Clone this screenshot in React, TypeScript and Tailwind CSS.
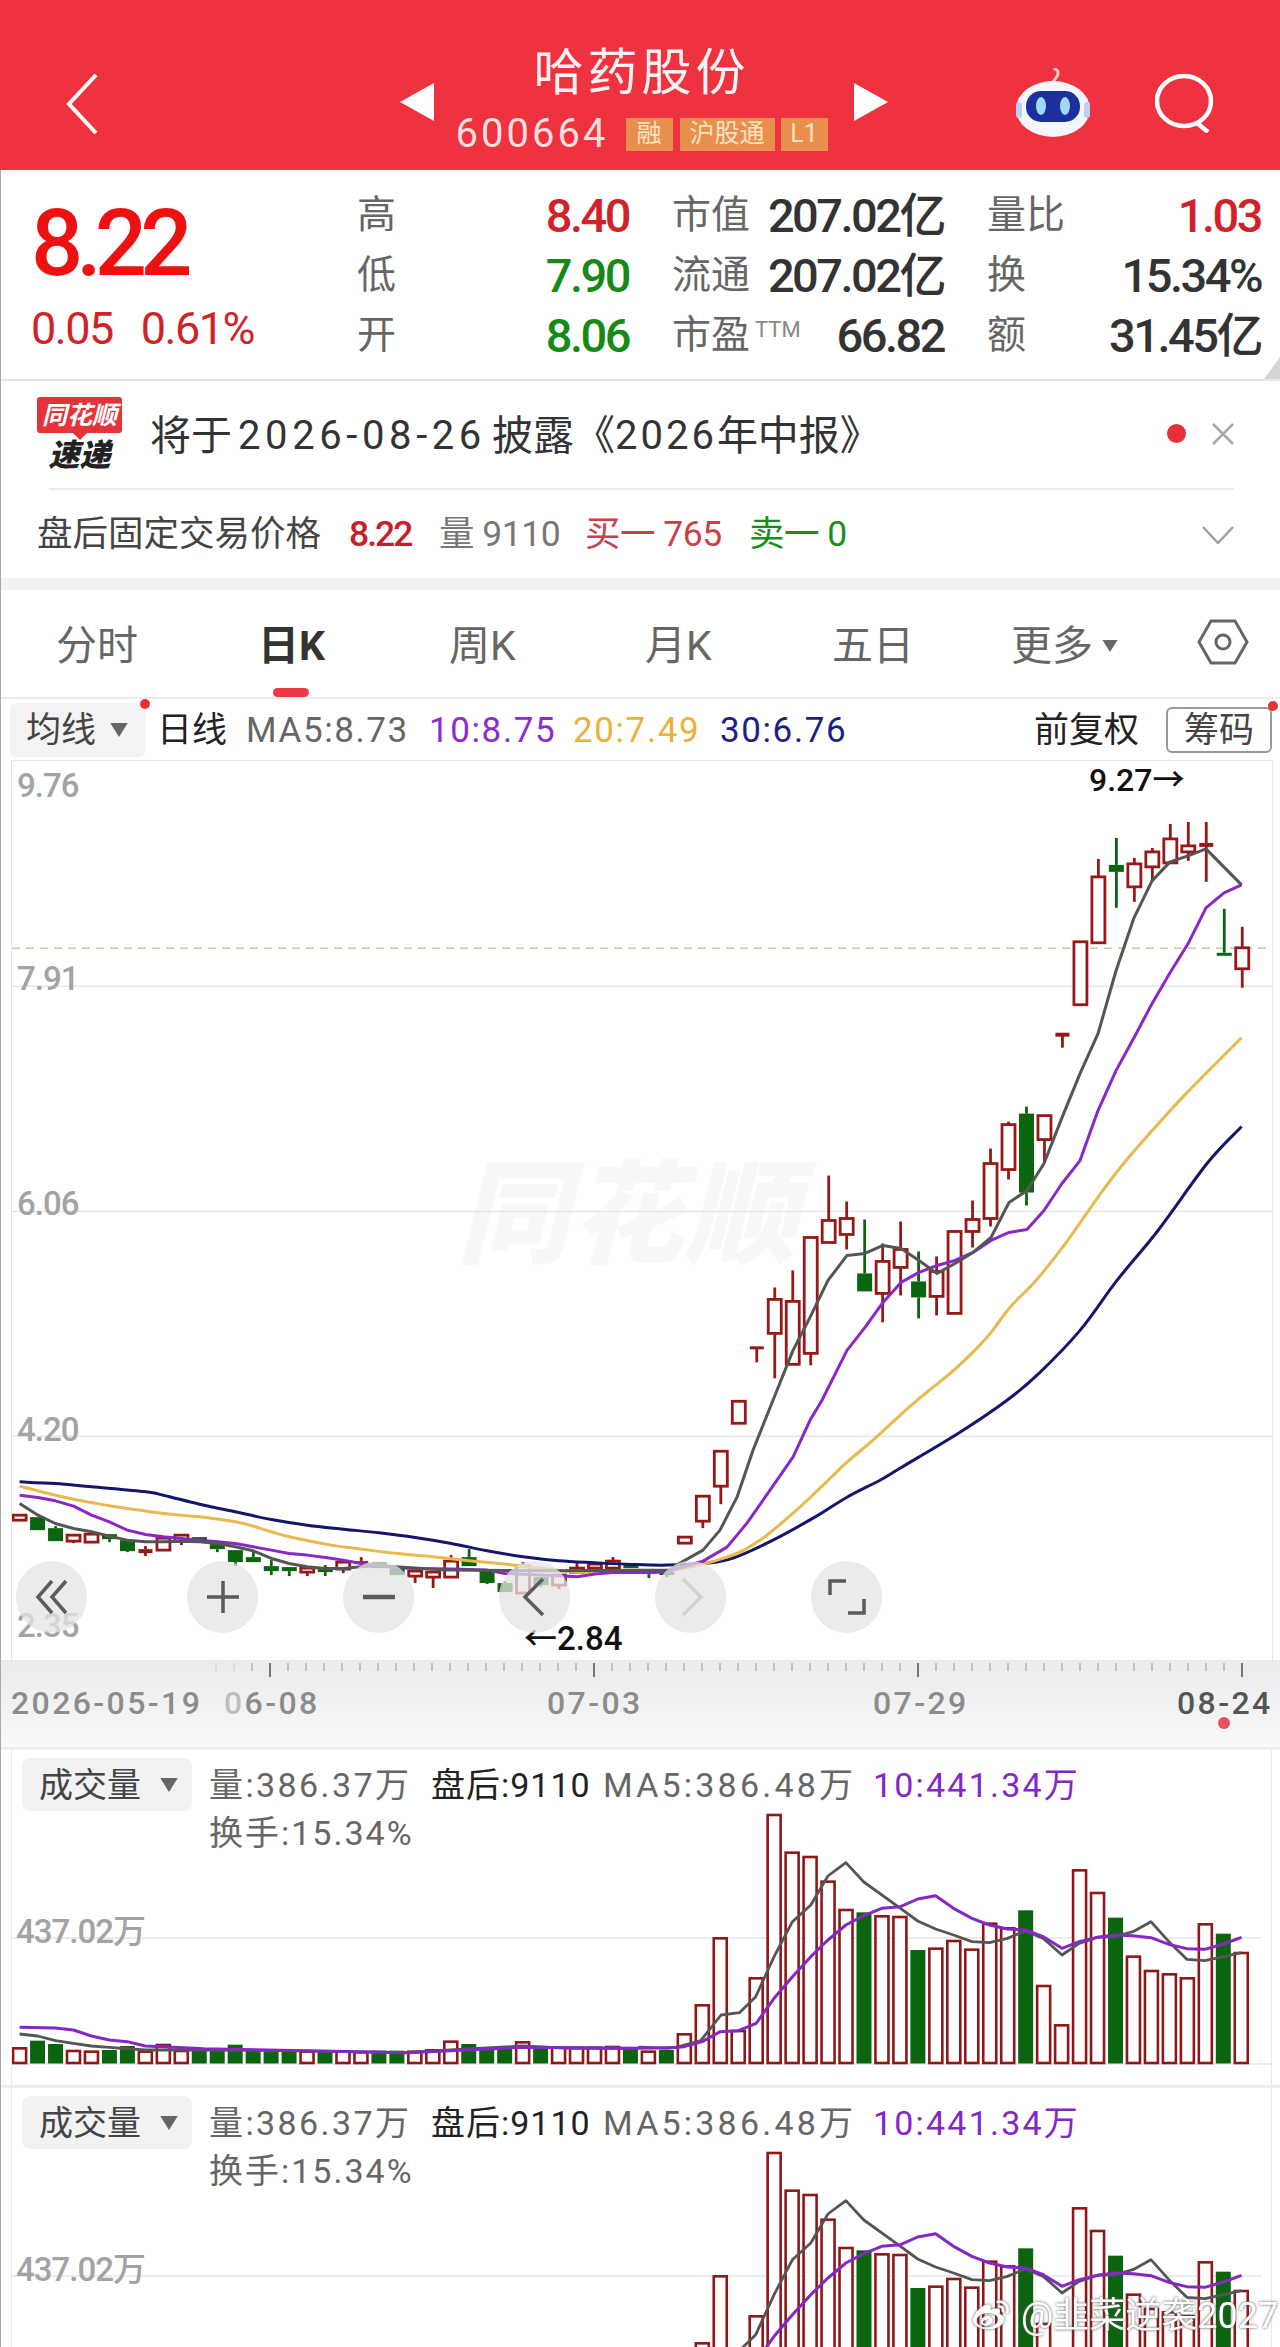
import { FaWeibo } from 'react-icons/fa'

type Pt = [number, number]
type Candle = { k: 'r' | 'g'; t: number; b: number; wt?: number; wb?: number }

const c = (k: 'r' | 'g', t: number, b: number, wt?: number, wb?: number): Candle => ({ k, t, b, wt, wb })
const cx = (i: number) => 19.6 + 17.98 * i

const RED = '#971818'
const GREEN = '#0b650f'

const candles: Candle[] = [
  c('r', 1515, 1520), c('g', 1517, 1530), c('g', 1528, 1541, 1526), c('r', 1535, 1541, undefined, 1543),
  c('r', 1534, 1542), c('g', 1534, 1539, undefined, 1542), c('g', 1540, 1551, undefined, 1552), c('r', 1549, 1552, 1546, 1556),
  c('r', 1538, 1550), c('r', 1535, 1541, 1534, 1545), c('g', 1537, 1542), c('g', 1544, 1549, undefined, 1552),
  c('g', 1550, 1562, undefined, 1566), c('g', 1557, 1562, 1551), c('g', 1566, 1571, 1560, 1575), c('g', 1567, 1571, undefined, 1576),
  c('r', 1568, 1572, undefined, 1576), c('g', 1569, 1572, 1565, 1576), c('r', 1562, 1569, undefined, 1573), c('r', 1561, 1563, 1557, 1565),
  c('g', 1562, 1568), c('g', 1568, 1575), c('r', 1571, 1576, undefined, 1583), c('r', 1572, 1577, undefined, 1588),
  c('r', 1561, 1577, 1555), c('g', 1557, 1566, 1549), c('g', 1569, 1583, undefined, 1584), c('g', 1583, 1592, 1581),
  c('r', 1566, 1593, 1562), c('g', 1577, 1585, undefined, 1587), c('r', 1575, 1585, undefined, 1589), c('r', 1568, 1572, 1562),
  c('r', 1564, 1568, 1563, 1570), c('r', 1561, 1568, 1557), c('g', 1563, 1568), c('g', 1570, 1574, undefined, 1578),
  c('g', 1572, 1575, undefined, 1577), c('r', 1537, 1543), c('r', 1496, 1521, undefined, 1528), c('r', 1451, 1486, undefined, 1504),
  c('r', 1401, 1423), c('r', 1346, 1348, undefined, 1362), c('r', 1299, 1333, 1287, 1378), c('r', 1301, 1364, 1270),
  c('r', 1237, 1353, undefined, 1365), c('r', 1220, 1242, 1175), c('r', 1218, 1234, 1201, 1249), c('g', 1273, 1291, 1219),
  c('r', 1261, 1293, 1243, 1322), c('r', 1249, 1267, 1221, 1295), c('g', 1281, 1297, 1251, 1318), c('r', 1271, 1296, 1256, 1315),
  c('r', 1231, 1313), c('r', 1219, 1231, 1200, 1247), c('r', 1163, 1218, 1148, 1226), c('r', 1124, 1169, 1121, 1179),
  c('g', 1113, 1192, 1106, 1205), c('r', 1115, 1139, undefined, 1162), c('r', 1032, 1035, undefined, 1047), c('r', 941, 1004),
  c('r', 876, 942, 858), c('g', 864, 871, 837, 907), c('r', 863, 886, 857, 901), c('r', 851, 866, 847, 880),
  c('r', 838, 862, 823), c('r', 845, 851, 821, 860), c('r', 842, 845, 821, 881), c('g', 952, 955, 908),
  c('r', 947, 968, 926, 987),
]

// left part of the lines was read off at 2.24x wide, 3x high
const L = (pts: Pt[]): Pt[] => pts.map(([x, y]) => [x / 2.24, 1400 + y / 3])

const ma5: Pt[] = [
  ...L([[44, 310], [85, 345], [124, 370], [165, 385], [205, 395], [245, 408], [285, 420], [326, 425], [366, 425], [406, 423], [447, 425], [487, 430], [527, 440], [567, 452], [608, 475], [648, 490], [688, 500], [729, 505], [769, 505], [809, 500], [849, 497], [1000, 510], [1250, 512], [1500, 510]]),
  [680, 1563], [703, 1550], [720, 1530], [737, 1497], [753, 1450], [773, 1400], [793, 1350], [810, 1317], [828, 1280], [847, 1255], [865, 1253], [883, 1245], [901, 1248], [919, 1260], [937, 1273], [955, 1263], [973, 1252], [991, 1237], [1009, 1202], [1027, 1190], [1044, 1163], [1062, 1117], [1080, 1073], [1098, 1033], [1116, 970], [1134, 917], [1152, 880], [1170, 861], [1188, 855], [1206, 848], [1241.6, 884],
]
const ma10: Pt[] = [
  ...L([[44, 285], [85, 292], [124, 302], [165, 318], [205, 345], [245, 365], [285, 390], [326, 403], [366, 410], [406, 415], [447, 420], [487, 425], [527, 430], [567, 440], [608, 450], [648, 460], [688, 465], [729, 472], [769, 480], [809, 490], [849, 497], [890, 503], [930, 505], [1011, 507], [1091, 510], [1131, 520], [1212, 525], [1252, 527], [1293, 530], [1333, 522], [1373, 517], [1454, 517], [1494, 515]]),
  [703, 1561], [727, 1547], [747, 1523], [770, 1490], [793, 1457], [810, 1420], [822, 1400], [847, 1350], [865, 1327], [883, 1302], [901, 1282], [919, 1272], [937, 1265], [955, 1260], [973, 1252], [991, 1240], [1009, 1232], [1027, 1229], [1044, 1210], [1062, 1183], [1080, 1160], [1098, 1110], [1116, 1070], [1134, 1037], [1152, 1003], [1170, 972], [1188, 943], [1206, 907], [1224, 892], [1241.6, 884],
]
const ma20: Pt[] = [
  ...L([[44, 258], [85, 272], [124, 285], [165, 297], [205, 307], [245, 317], [285, 325], [366, 340], [447, 350], [527, 365], [567, 378], [608, 395], [648, 410], [729, 432], [809, 447], [890, 460], [970, 470], [1051, 482], [1131, 492], [1212, 505], [1293, 515], [1373, 515], [1494, 513]]),
  [727, 1557], [760, 1540], [793, 1513], [820, 1488], [847, 1462], [873, 1440], [900, 1415], [917, 1400], [957, 1367], [987, 1337], [1010, 1307], [1036, 1280], [1064, 1245], [1097, 1198], [1122, 1165], [1154, 1128], [1187, 1092], [1241.6, 1037],
]
const ma30: Pt[] = [
  ...L([[44, 245], [124, 250], [205, 260], [326, 275], [366, 285], [447, 312], [527, 335], [608, 358], [688, 375], [769, 387], [849, 398], [930, 412], [1011, 430], [1091, 452], [1172, 470], [1252, 482], [1333, 488], [1413, 493], [1494, 495]]),
  [707, 1563], [733, 1558], [773, 1540], [813, 1518], [847, 1497], [880, 1480], [900, 1468], [960, 1432], [1007, 1400], [1040, 1372], [1080, 1330], [1117, 1280], [1158, 1230], [1207, 1163], [1241.6, 1126],
]

const pl = (pts: Pt[]) => pts.map(([x, y]) => `${x},${y}`).join(' ')

// catmull-rom through the read-off points, so the long averages don't kink
function smooth(pts: Pt[]) {
  let d = `M${pts[0][0]} ${pts[0][1]}`
  for (let i = 0; i < pts.length - 1; i++) {
    const p0 = pts[Math.max(i - 1, 0)]
    const p1 = pts[i]
    const p2 = pts[i + 1]
    const p3 = pts[Math.min(i + 2, pts.length - 1)]
    d += ` C${p1[0] + (p2[0] - p0[0]) / 6} ${p1[1] + (p2[1] - p0[1]) / 6} ${p2[0] - (p3[0] - p1[0]) / 6} ${p2[1] - (p3[1] - p1[1]) / 6} ${p2[0]} ${p2[1]}`
  }
  return d
}

const volBars: { k: 'r' | 'g'; top: number }[] = [
  ...([
    ['r', 922], ['g', 902], ['g', 912], ['r', 930], ['r', 932], ['g', 930], ['g', 918], ['r', 932], ['r', 912], ['r', 930],
    ['g', 930], ['g', 930], ['g', 914], ['g', 930], ['g', 928], ['g', 930], ['r', 932], ['g', 932], ['r', 932], ['r', 934],
    ['g', 932], ['g', 932], ['r', 932], ['r', 928], ['r', 902], ['g', 912], ['g', 930], ['g', 925], ['r', 904], ['g', 925],
    ['r', 920], ['r', 920], ['r', 920], ['r', 918], ['g', 925],
  ] as ['r' | 'g', number][]).map(([k, z]) => ({ k, top: 1740 + z / 3 })),
  ...([
    ['r', 962], ['g', 960], ['r', 910], ['r', 823], ['r', 622], ['r', 900], ['r', 742], ['r', 252], ['r', 365], ['r', 378],
    ['r', 452], ['r', 537], ['g', 547], ['r', 556], ['r', 558], ['g', 660], ['r', 653], ['r', 630], ['r', 656], ['r', 578],
    ['r', 592], ['g', 541], ['r', 765], ['r', 883], ['r', 418], ['r', 486], ['g', 563], ['r', 677], ['r', 720], ['r', 730],
    ['r', 742], ['r', 580], ['g', 611], ['r', 666],
  ] as ['r' | 'g', number][]).map(([k, z]) => ({ k, top: 1730 + z / 3 })),
]

const volL = (pts: Pt[]): Pt[] => pts.map(([x, y]) => [x / 2.45, 1740 + y / 3])
const volR = (pts: Pt[]): Pt[] => pts.map(([x, y]) => [640 + x / 2.45, 1730 + y / 3])

const volMa5: Pt[] = [
  ...volL([[48, 882], [92, 888], [136, 902], [180, 910], [224, 918], [268, 922], [356, 930], [500, 930], [700, 932], [1000, 938], [1104, 930], [1280, 918], [1400, 925], [1560, 925]]),
  ...volR([[0, 955], [90, 952], [150, 932], [200, 855], [245, 848], [285, 800], [330, 680], [375, 575], [420, 525], [462, 438], [506, 398], [550, 456], [640, 535], [682, 573], [726, 597], [770, 615], [815, 635], [858, 638], [902, 625], [946, 603], [990, 625], [1036, 675], [1078, 640], [1122, 622], [1166, 620], [1210, 605], [1254, 575], [1298, 635], [1342, 688], [1386, 692], [1432, 680], [1476, 668]]),
]
const volMa10: Pt[] = [
  ...volL([[48, 862], [136, 864], [180, 870], [224, 888], [268, 900], [312, 905], [356, 918], [400, 920], [500, 926], [750, 932], [1000, 938], [1104, 932], [1280, 922], [1560, 925]]),
  ...volR([[0, 952], [66, 955], [110, 950], [154, 935], [198, 905], [242, 902], [286, 880], [330, 805], [375, 740], [420, 680], [462, 630], [506, 585], [550, 557], [594, 535], [640, 530], [682, 507], [726, 497], [770, 535], [815, 565], [858, 585], [902, 597], [946, 600], [990, 620], [1036, 655], [1078, 635], [1122, 622], [1166, 615], [1210, 617], [1254, 623], [1298, 643], [1342, 656], [1386, 658], [1432, 642], [1476, 622]]),
]

const ticks = Array.from({ length: 58 }, (_, i) => 216 + 18 * i)
const majorTicks = [270, 594, 918, 1242]

function Tri({ className }: { className: string }) {
  return (
    <svg viewBox="0 0 10 8" className={className}>
      <polygon points="0,0 10,0 5,8" fill="currentColor" />
    </svg>
  )
}

function Robot() {
  return (
    <svg viewBox="0 0 76 70" className="h-[70px] w-[76px]">
      <path d="M38 16 C38 10 44 10 43 4 C42 1 40 1 39 2" fill="none" stroke="#f6c9c9" strokeWidth="3" />
      <ellipse cx="38" cy="41" rx="37" ry="28" fill="#f3f6fd" />
      <rect x="1" y="34" width="6" height="16" rx="3" fill="#bcd0f2" />
      <rect x="69" y="34" width="6" height="16" rx="3" fill="#bcd0f2" />
      <rect x="11" y="23" width="54" height="31" rx="15" fill="#1d2f9c" />
      <ellipse cx="26" cy="38" rx="5" ry="9" fill="#9fd9f7" />
      <ellipse cx="50" cy="38" rx="5" ry="9" fill="#9fd9f7" />
    </svg>
  )
}

function Stat({ label, value, color, extra }: { label: string; value: string; color: string; extra?: string }) {
  return (
    <div className="flex h-[60px] items-center justify-between">
      <span className="relative text-[39px] leading-none text-[#666]">
        {label}
        {extra && <span className="absolute left-[83px] top-[3px] text-[22px] text-[#888]">{extra}</span>}
      </span>
      <span className={`text-[47px] leading-none font-medium tracking-[-2.5px] ${color}`}>{value}</span>
    </div>
  )
}

function RoundBtn({ children }: { children: React.ReactNode }) {
  return (
    <div className="flex h-[72px] w-[71px] items-center justify-center rounded-full bg-[#e4e4e4]/75">
      <svg viewBox="0 0 44 44" className="h-[44px] w-[44px]" fill="none" stroke="#5c5c5c" strokeWidth="3.5">
        {children}
      </svg>
    </div>
  )
}

function VolumePanel() {
  return (
    <div className="relative h-[338px] border-t-[3px] border-[#eeeeee] pl-[11px] pr-[8px]">
      <div className="relative h-full border-x border-[#e9e9e9]">
        <svg viewBox="12 1750 1260 335" className="absolute inset-0 h-full w-full" preserveAspectRatio="none">
          <line x1="12" x2="1262" y1="1938" y2="1938" stroke="#e6e6e6" strokeWidth="1.5" />
          <line x1="12" x2="1272" y1="2064" y2="2064" stroke="#e6e6e6" strokeWidth="1.5" />
          {volBars.map((b, i) =>
            b.k === 'g' ? (
              <rect key={i} x={cx(i) - 7.5} y={b.top} width={15} height={2063.5 - b.top} fill={GREEN} />
            ) : (
              <rect key={i} x={cx(i) - 6.5} y={b.top + 1} width={13} height={2062 - b.top} fill="#fff" stroke="#8f1717" strokeWidth="2.6" />
            ),
          )}
          <polyline points={pl(volMa5)} fill="none" stroke="#555" strokeWidth="2.8" strokeLinejoin="round" />
          <polyline points={pl(volMa10)} fill="none" stroke="#8427c4" strokeWidth="3" strokeLinejoin="round" />
        </svg>
        <div className="relative flex items-start pl-[10px] pt-[8px]">
          <div className="flex h-[53px] w-[170px] items-center rounded-lg bg-[#f2f2f2] pl-[17px] text-[34px] leading-none text-[#444]">
            成交量
            <Tri className="ml-[19px] h-[14px] w-[18px] text-[#666]" />
          </div>
          <div className="ml-[17px] pt-[3px] text-[34px] leading-[48px] tracking-[2px] whitespace-nowrap">
            <div className="flex text-[#666]">
              <span className="w-[222px] tracking-[2.4px]">量:386.37万</span>
              <span className="w-[172px] tracking-[1px] text-[#222]">盘后:9110</span>
              <span className="w-[270px] tracking-[3.2px]">MA5:386.48万</span>
              <span className="tracking-[2.2px] text-[#8427c4]">10:441.34万</span>
            </div>
            <div className="text-[#666]">换手:15.34%</div>
          </div>
        </div>
        <span className="absolute left-[4px] top-[165px] text-[33px] leading-none font-medium tracking-[-1px] text-[#a3a3a3]">437.02万</span>
      </div>
    </div>
  )
}

export default function App() {
  return (
    <div className="relative h-[2347px] w-[1280px] overflow-hidden bg-white font-[Roboto,'Noto_Sans_CJK_SC',sans-serif]">
      {/* top bar */}
      <header className="flex h-[170px] items-center bg-[#ee3240] text-white">
        <svg viewBox="0 0 32 60" className="ml-[66px] mt-[37px] h-[60px] w-[32px]" fill="none" stroke="white" strokeWidth="4">
          <polyline points="30,1 3,30 30,59" />
        </svg>
        <svg viewBox="0 0 34 38" className="ml-[302px] mt-[34px] h-[38px] w-[34px]">
          <polygon points="34,0 34,38 0,19" fill="white" />
        </svg>
        <div className="ml-[23px] flex w-[397px] flex-col items-center pr-[28px] pt-[22px]">
          <div className="text-[50px] leading-[62px] tracking-[4px] text-[#fff3f3]">哈药股份</div>
          <div className="mt-[14px] flex h-[33px] w-[372px] items-center">
            <span className="w-[170px] text-[40px] leading-none tracking-[3px] text-[#fbdede]">600664</span>
            <span className="flex h-[33px] w-[47px] items-center justify-center bg-[#e88f4d] text-[25px] text-[#fde3c4]">融</span>
            <span className="ml-[7px] flex h-[33px] w-[95px] items-center justify-center bg-[#e88f4d] text-[25px] text-[#fde3c4]">沪股通</span>
            <span className="ml-[6px] flex h-[33px] w-[47px] items-center justify-center bg-[#e88f4d] text-[25px] text-[#fde3c4]">L1</span>
          </div>
        </div>
        <svg viewBox="0 0 34 38" className="mt-[34px] h-[38px] w-[34px]">
          <polygon points="0,0 0,38 34,19" fill="white" />
        </svg>
        <div className="ml-[127px] mt-[36px]">
          <Robot />
        </div>
        <svg viewBox="0 0 60 60" className="ml-[64px] mt-[36px] h-[60px] w-[60px]" fill="none" stroke="white" strokeWidth="4.5">
          <ellipse cx="29" cy="28" rx="27" ry="25" />
          <line x1="42" y1="50" x2="53" y2="59" />
        </svg>
      </header>

      {/* quote */}
      <section className="relative flex h-[211px] border-b-2 border-[#e6e6e6] pt-[15px]">
        <div className="w-[357px] pl-[31px]">
          <div className="mt-[17px] text-[92px] leading-[84px] font-medium tracking-[-7px] text-[#ee1111]">8.22</div>
          <div className="mt-[19px] flex gap-[28px] text-[45px] leading-[48px] tracking-[-1.5px] text-[#d1222a]">
            <span>0.05</span>
            <span>0.61%</span>
          </div>
        </div>
        <div className="grid h-[180px] grid-cols-[272px_272px_274px] gap-x-[43px]">
          <div>
            <Stat label="高" value="8.40" color="text-[#d1222a]" />
            <Stat label="低" value="7.90" color="text-[#158a17]" />
            <Stat label="开" value="8.06" color="text-[#158a17]" />
          </div>
          <div>
            <Stat label="市值" value="207.02亿" color="text-[#333]" />
            <Stat label="流通" value="207.02亿" color="text-[#333]" />
            <Stat label="市盈" value="66.82" color="text-[#333]" extra="TTM" />
          </div>
          <div>
            <Stat label="量比" value="1.03" color="text-[#d1222a]" />
            <Stat label="换" value="15.34%" color="text-[#333]" />
            <Stat label="额" value="31.45亿" color="text-[#333]" />
          </div>
        </div>
        <div className="absolute bottom-0 right-0 h-[22px] w-[16px] bg-[#d5d5d5] [clip-path:polygon(100%_0,100%_100%,0_100%)]" />
      </section>

      {/* notice */}
      <section className="flex h-[107px] items-center border-b-2 border-transparent pl-[37px]">
        <div className="flex w-[85px] flex-col items-center pt-[2px]">
          <div className="relative flex h-[36px] w-[85px] items-center justify-center rounded-[3px] bg-[#e4343a] text-[25px] leading-none font-bold italic text-white">
            同花顺
            <div className="absolute -bottom-[5px] left-[38px] h-[10px] w-[10px] rotate-45 bg-[#e4343a]" />
          </div>
          <div className="mt-[7px] text-[31px] leading-[32px] font-black italic text-[#222]">速递</div>
        </div>
        <div className="ml-[28px] flex items-center pt-[5px] text-[41px] leading-none whitespace-nowrap text-[#333]">
          将于
          <span className="mx-[6px] text-[40px] tracking-[4.6px]">2026-08-26</span>
          披露《
          <span className="text-[40px] tracking-[3px]">2026</span>
          年中报》
        </div>
        <div className="ml-auto h-[19px] w-[19px] rounded-full bg-[#e9303a]" />
        <svg viewBox="0 0 22 22" className="ml-[26px] mr-[46px] h-[22px] w-[22px]" fill="none" stroke="#a8a8a8" strokeWidth="2.5">
          <path d="M1 1 L21 21 M21 1 L1 21" />
        </svg>
      </section>
      <div className="mx-[49px] h-[2px] w-[1185px] bg-[#ececec]" />
      <section className="flex h-[88px] items-center pl-[37px] pt-[2px] text-[35.5px] leading-none whitespace-nowrap">
        <span className="w-[312px] text-[#444]">盘后固定交易价格</span>
        <span className="w-[90px] font-medium tracking-[-2px] text-[#c8202a]">8.22</span>
        <span className="w-[146px] tracking-[-0.5px] text-[#777]">量 9110</span>
        <span className="w-[164px] tracking-[-0.5px] text-[#c9404a]">买一 765</span>
        <span className="tracking-[-0.5px] text-[#189018]">卖一 0</span>
        <svg viewBox="0 0 32 18" className="ml-auto mr-[46px] h-[18px] w-[32px]" fill="none" stroke="#a0a0a0" strokeWidth="2.5">
          <polyline points="1,1 16,17 31,1" />
        </svg>
      </section>
      <div className="h-[12px] bg-[#f3f3f3]" />

      {/* period tabs */}
      <nav className="relative flex h-[109px] items-center border-b-2 border-[#ececec] pt-[5px] text-[41px] leading-none whitespace-nowrap text-[#666]">
        <span className="ml-[56px] w-[202px]">分时</span>
        <span className="w-[191px] font-bold text-[#333]">日K</span>
        <span className="w-[196px]">周K</span>
        <span className="w-[187px]">月K</span>
        <span className="w-[179px]">五日</span>
        <span>更多</span>
        <Tri className="ml-[8px] h-[12px] w-[18px] text-[#666]" />
        <svg viewBox="0 0 52 46" className="ml-[78px] -mt-[8px] h-[46px] w-[52px]" fill="none" stroke="#666" strokeWidth="3">
          <polygon points="14,2 38,2 50,23 38,44 14,44 2,23" />
          <circle cx="26" cy="23" r="7" />
        </svg>
        <div className="absolute bottom-0 left-[273px] h-[9px] w-[36px] rounded-full bg-[#ee3a44]" />
      </nav>

      {/* ma legend */}
      <section className="relative flex h-[61px] items-center pl-[10px] pt-[1px] text-[35px] leading-none whitespace-nowrap">
        <div className="flex h-[54px] w-[135px] items-center rounded-md bg-[#f3f3f3] pl-[16px] text-[#444]">
          均线
          <Tri className="ml-[14px] h-[14px] w-[18px] text-[#666]" />
        </div>
        <span className="ml-[12px] w-[89px] text-[#222]">日线</span>
        <div className="flex tracking-[1.6px]">
          <span className="w-[183px] text-[#666]">MA5:8.73</span>
          <span className="w-[144px] text-[#8b2bd6]">10:8.75</span>
          <span className="w-[147px] text-[#e8b23c]">20:7.49</span>
          <span className="text-[#1c1f85]">30:6.76</span>
        </div>
        <span className="ml-auto text-[#222]">前复权</span>
        <div className="ml-[27px] mr-[8px] flex h-[46px] w-[106px] items-center justify-center rounded-md border-2 border-[#999] text-[#444]">筹码</div>
        <div className="absolute left-[140px] top-0 h-[10px] w-[10px] rounded-full bg-[#e9303a]" />
        <div className="absolute left-[1268px] top-[2px] h-[10px] w-[10px] rounded-full bg-[#e9303a]" />
      </section>

      {/* k-line chart */}
      <section className="relative h-[900px] pl-[11px] pr-[7px]">
        <div className="relative h-full border-x border-t border-[#e6e6e6]">
          <div className="absolute left-[445px] top-[399px] text-[112px] leading-none font-black italic tracking-[2px] text-[#f8f8f8]">同花顺</div>
          <svg viewBox="12 760 1260 900" className="absolute inset-0 h-full w-full" preserveAspectRatio="none">
            {[985.5, 1211, 1436].map((y) => (
              <line key={y} x1="12" x2="1272" y1={y} y2={y} stroke="#e6e6e6" strokeWidth="1.5" />
            ))}
            <line x1="12" x2="1272" y1="947.5" y2="947.5" stroke="#c9c6a4" strokeWidth="1.5" strokeDasharray="8 6" />
            {candles.map((d, i) => {
              const x = cx(i)
              const col = d.k === 'r' ? RED : GREEN
              return (
                <g key={i}>
                  {d.wt !== undefined && <line x1={x} x2={x} y1={d.wt} y2={d.t} stroke={col} strokeWidth="2.8" />}
                  {d.wb !== undefined && <line x1={x} x2={x} y1={d.b} y2={d.wb} stroke={col} strokeWidth="2.8" />}
                  {d.k === 'g' ? (
                    <rect x={x - 7.5} y={d.t} width={15} height={d.b - d.t} fill={col} />
                  ) : d.b - d.t <= 3 ? (
                    <rect x={x - 7} y={d.t} width={14} height={d.b - d.t + 1} fill={col} />
                  ) : (
                    <rect x={x - 6.5} y={d.t} width={13} height={d.b - d.t} fill="#fff" stroke={col} strokeWidth="2.8" />
                  )}
                </g>
              )
            })}
            <path d={smooth(ma30)} fill="none" stroke="#15156e" strokeWidth="3" />
            <path d={smooth(ma20)} fill="none" stroke="#e9b84e" strokeWidth="3" />
            <polyline points={pl(ma10)} fill="none" stroke="#8a27c9" strokeWidth="3" strokeLinejoin="round" />
            <polyline points={pl(ma5)} fill="none" stroke="#555" strokeWidth="3" strokeLinejoin="round" />
          </svg>

          <span className="absolute left-[5px] top-[8px] text-[33px] leading-none font-medium tracking-[-1px] text-[#a3a3a3]">9.76</span>
          <span className="absolute left-[5px] top-[201px] text-[33px] leading-none font-medium tracking-[-1px] text-[#a3a3a3]">7.91</span>
          <span className="absolute left-[5px] top-[426px] text-[33px] leading-none font-medium tracking-[-1px] text-[#a3a3a3]">6.06</span>
          <span className="absolute left-[5px] top-[652px] text-[33px] leading-none font-medium tracking-[-1px] text-[#a3a3a3]">4.20</span>
          <span className="absolute left-[5px] top-[848px] text-[33px] leading-none font-medium tracking-[-1px] text-[#a3a3a3]">2.35</span>
          <span className="absolute left-[1077px] top-[3px] text-[32px] leading-none font-medium text-[#111]">9.27→</span>
          <span className="absolute left-[512px] top-[861px] text-[33px] leading-none font-medium text-[#111]">←2.84</span>

          {/* zoom and pan buttons float above the candles */}
          <div className="absolute left-[4px] top-[800px] flex gap-[85px]">
            <div className="mr-[15px]">
              <RoundBtn>
                <path d="M22 6 L8 22 L22 38 M36 6 L22 22 L36 38" />
              </RoundBtn>
            </div>
            <RoundBtn>
              <path d="M22 6 V38 M6 22 H38" />
            </RoundBtn>
            <RoundBtn>
              <path d="M6 22 H38" strokeWidth="4.5" />
            </RoundBtn>
            <RoundBtn>
              <path d="M30 4 L12 22 L30 40" />
            </RoundBtn>
            <RoundBtn>
              <path d="M14 4 L32 22 L14 40" stroke="#d2d2d2" />
            </RoundBtn>
            <RoundBtn>
              <path d="M5 20 V6 H21 M39 24 V38 H23" />
            </RoundBtn>
          </div>
        </div>
      </section>

      {/* time axis */}
      <section className="relative h-[87px] bg-linear-to-b from-[#ebebeb] to-[#f8f8f8] pl-[11px] text-[32px] leading-none font-medium tracking-[2.4px]">
        <svg viewBox="0 0 1280 20" className="absolute left-0 top-0 h-[20px] w-[1280px]">
          {ticks.map((x, i) => (
            <line
              key={x}
              x1={x}
              x2={x}
              y1={3}
              y2={majorTicks.includes(x) ? 17 : 11}
              stroke={majorTicks.includes(x) ? '#777' : '#b5b5b5'}
              strokeWidth={majorTicks.includes(x) ? 2 : 1.5}
              opacity={i < 2 ? 0.4 : 1}
            />
          ))}
        </svg>
        <div className="flex pt-[27px] whitespace-nowrap text-[#8c8c8c]">
          <span className="w-[213px]">2026-05-19</span>
          <span className="w-[323px]">
            <span className="opacity-50">0</span>6-08
          </span>
          <span className="w-[326px]">07-03</span>
          <span className="w-[304px]">07-29</span>
          <span className="text-[#555]">08-24</span>
        </div>
        <div className="absolute left-[1218px] top-[57px] h-[12px] w-[12px] rounded-full bg-[#e8505c]" />
      </section>

      <VolumePanel />
      <VolumePanel />

      <div className="absolute left-[970px] top-[2298px] flex items-center gap-[9px] text-[36px] leading-none whitespace-nowrap text-white drop-shadow-[0_0_1.5px_#555]">
        <FaWeibo className="h-[36px] w-[42px]" />
        <span>@韭菜逆袭2027</span>
      </div>

      <div className="absolute bottom-0 left-0 top-[170px] w-px bg-[#aaaaaa]" />
    </div>
  )
}
